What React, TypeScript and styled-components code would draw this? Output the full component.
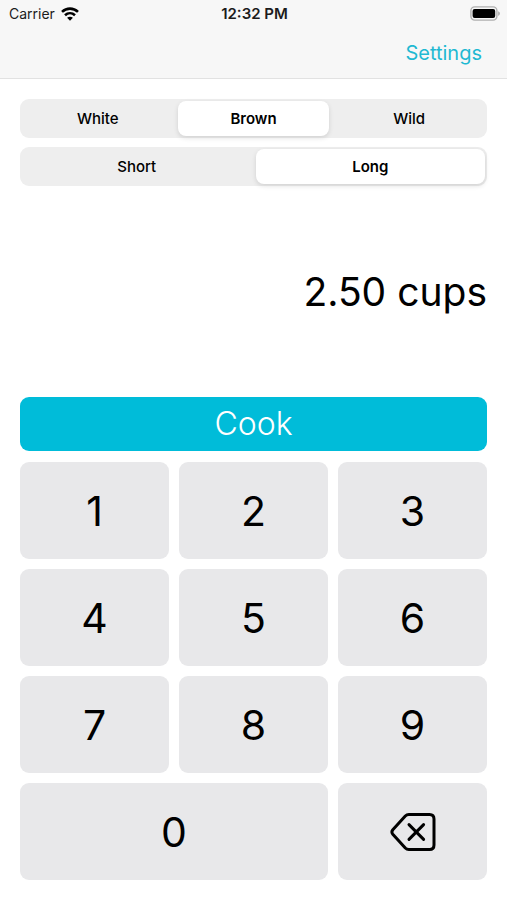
import React, { useState } from "react";
import styled, { createGlobalStyle } from "styled-components";

const GlobalStyle = createGlobalStyle`
  *, *::before, *::after { box-sizing: border-box; }
  body {
    margin: 0;
    background: #ffffff;
    color: #000000;
    font-family: Inter, "Liberation Sans", sans-serif;
  }
  button, input, output { font: inherit; color: inherit; }
`;

const Screen = styled.div`
  display: flex;
  flex-direction: column;
  min-height: 100vh;
`;

const Header = styled.header`
  background: #f7f7f7;
  border-bottom: 1px solid #e2e2e2;
`;

const StatusBar = styled.div`
  display: grid;
  grid-template-columns: 1fr auto 1fr;
  align-items: center;
  height: 27px;
  padding: 0 7px 0 9px;
  font-size: 14px;
  line-height: 20px;
  color: #1c1c1c;
`;

const Carrier = styled.div`
  display: flex;
  align-items: center;
  gap: 6px;
`;

const Clock = styled.time`
  font-size: 15px;
  font-weight: 600;
`;

const BatteryIcon = styled.svg`
  justify-self: end;
`;

const NavBar = styled.nav`
  display: flex;
  justify-content: flex-end;
  align-items: center;
  height: 51px;
  padding: 0 25px;
`;

const NavButton = styled.button`
  border: 0;
  padding: 0;
  background: none;
  font-size: 20px;
  line-height: 28px;
  color: #1fb9d2;
  cursor: pointer;
`;

const Main = styled.main`
  display: flex;
  flex: 1;
  flex-direction: column;
  padding: 20px;
`;

const Options = styled.div`
  display: grid;
  gap: 9px;
`;

const Segmented = styled.fieldset`
  display: flex;
  min-width: 0;
  margin: 0;
  border: 0;
  border-radius: 9px;
  padding: 0;
  background: #eeeeee;
`;

const SegmentText = styled.span`
  display: block;
  border-radius: 8px;
  font-size: 15px;
  line-height: 35px;
  font-weight: 500;
  text-align: center;
`;

const SegmentInput = styled.input`
  appearance: none;
  position: absolute;
  margin: 0;
  opacity: 0;

  &:checked + ${SegmentText} {
    background: #ffffff;
    box-shadow: 0 2px 5px rgba(0, 0, 0, 0.12);
    font-weight: 600;
  }

  &:focus-visible + ${SegmentText} {
    outline: 2px solid #00bcd9;
  }
`;

const Segment = styled.label`
  flex: 1;
  padding: 2px;
  cursor: pointer;
`;

const Amount = styled.output`
  display: flex;
  flex: 1;
  align-items: center;
  justify-content: flex-end;
  font-size: 39px;
  line-height: 48px;
`;

const CookButton = styled.button`
  height: 54px;
  margin-bottom: 11px;
  border: 0;
  border-radius: 9px;
  padding: 0;
  background: #00bcd9;
  font-size: 32px;
  line-height: 40px;
  font-weight: 300;
  color: #ffffff;
  cursor: pointer;
`;

const Keypad = styled.div`
  display: grid;
  grid-template-columns: repeat(3, 1fr);
  grid-auto-rows: 97px;
  gap: 10px;
`;

const Key = styled.button<{ $wide?: boolean }>`
  display: flex;
  align-items: center;
  justify-content: center;
  grid-column: span ${(p) => (p.$wide ? 2 : 1)};
  border: 0;
  border-radius: 9px;
  padding: 0;
  background: #e8e8ea;
  font-size: 41px;
  line-height: 48px;
  cursor: pointer;
`;

function SegmentedControl(props: {
  name: string;
  options: string[];
  value: string;
  onChange: (value: string) => void;
}) {
  return (
    <Segmented aria-label={props.name}>
      {props.options.map((option) => (
        <Segment key={option}>
          <SegmentInput
            type="radio"
            name={props.name}
            value={option}
            checked={option === props.value}
            onChange={() => props.onChange(option)}
          />
          <SegmentText>{option}</SegmentText>
        </Segment>
      ))}
    </Segmented>
  );
}

function Wifi() {
  return (
    <svg width="18" height="14" viewBox="0 0 18 14" fill="none" stroke="#000000" strokeWidth="2.6" aria-hidden="true">
      <path d="M1 4.9C5.6 0.5 12.4 0.5 17 4.9" />
      <path d="M4 8.2C6.9 5.5 11.1 5.5 14 8.2" />
      <path d="M6.1 10.8C7.8 9.3 10.2 9.3 11.9 10.8L9 13.7Z" fill="#000000" stroke="none" />
    </svg>
  );
}

function Battery() {
  return (
    <BatteryIcon width="30" height="15" viewBox="0 0 30 15" aria-label="Battery full" role="img">
      <rect x="0.9" y="0.9" width="26" height="13.2" rx="3.8" fill="#f7f7f7" stroke="#b0b0b0" strokeWidth="1.4" />
      <rect x="2.6" y="2.9" width="22.6" height="9.2" rx="2" fill="#000000" />
      <path d="M28.2 5.2C30.4 6 30.4 9 28.2 9.8Z" fill="#a8a8a8" />
    </BatteryIcon>
  );
}

function Backspace() {
  return (
    <svg
      width="46"
      height="40"
      viewBox="0 0 46 40"
      fill="none"
      stroke="#000000"
      strokeWidth="3"
      strokeLinecap="round"
      strokeLinejoin="round"
      aria-hidden="true"
    >
      <path d="M18.8 2.5H39.5Q44 2.5 44 7V33Q44 37.5 39.5 37.5H18.8Q16.8 37.5 15.3 36L2.8 22.2Q1 20 2.8 17.8L15.3 4Q16.8 2.5 18.8 2.5Z" />
      <path d="M19 12.6L33.6 27.4M33.6 12.6L19 27.4" />
    </svg>
  );
}

const DIGITS = ["1", "2", "3", "4", "5", "6", "7", "8", "9"];

export default function App() {
  const [color, setColor] = useState("Brown");
  const [grain, setGrain] = useState("Long");
  const [hundredths, setHundredths] = useState(250);

  const press = (digit: string) =>
    setHundredths((n) => (n < 10000 ? n * 10 + Number(digit) : n));

  return (
    <>
      <GlobalStyle />
      <Screen>
        <Header>
          <StatusBar>
            <Carrier>
              Carrier
              <Wifi />
            </Carrier>
            <Clock>12:32 PM</Clock>
            <Battery />
          </StatusBar>
          <NavBar>
            <NavButton type="button">Settings</NavButton>
          </NavBar>
        </Header>
        <Main>
          <Options>
            <SegmentedControl name="Rice color" options={["White", "Brown", "Wild"]} value={color} onChange={setColor} />
            <SegmentedControl name="Grain length" options={["Short", "Long"]} value={grain} onChange={setGrain} />
          </Options>
          <Amount>{(hundredths / 100).toFixed(2)} cups</Amount>
          <CookButton type="button">Cook</CookButton>
          <Keypad>
            {DIGITS.map((digit) => (
              <Key key={digit} type="button" onClick={() => press(digit)}>
                {digit}
              </Key>
            ))}
            <Key type="button" $wide onClick={() => press("0")}>
              0
            </Key>
            <Key type="button" aria-label="Delete" onClick={() => setHundredths((n) => Math.floor(n / 10))}>
              <Backspace />
            </Key>
          </Keypad>
        </Main>
      </Screen>
    </>
  );
}
